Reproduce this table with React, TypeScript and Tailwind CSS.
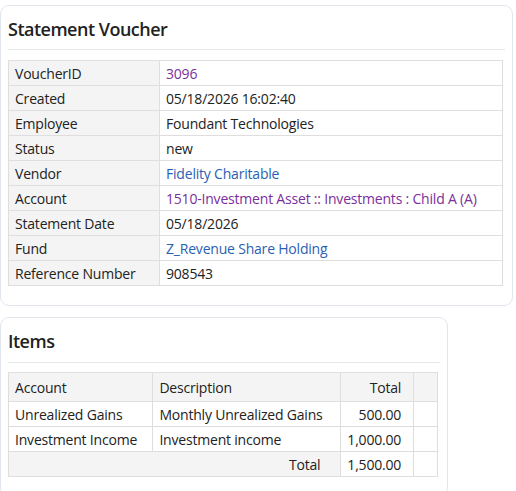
const rows: { label: string; value: string; kind?: "visited" | "link" }[] = [
  { label: "VoucherID", value: "3096", kind: "visited" },
  { label: "Created", value: "05/18/2026 16:02:40" },
  { label: "Employee", value: "Foundant Technologies" },
  { label: "Status", value: "new" },
  { label: "Vendor", value: "Fidelity Charitable", kind: "link" },
  { label: "Account", value: "1510-Investment Asset :: Investments : Child A (A)", kind: "visited" },
  { label: "Statement Date", value: "05/18/2026" },
  { label: "Fund", value: "Z_Revenue Share Holding", kind: "link" },
  { label: "Reference Number", value: "908543" },
];

const items = [
  { account: "Unrealized Gains", description: "Monthly Unrealized Gains", total: "500.00" },
  { account: "Investment Income", description: "Investment income", total: "1,000.00" },
];

const cell = "border border-[#dedede] px-[6px] h-[25px] align-middle";

export default function App() {
  return (
    <div className="w-[516px] h-[491px] bg-white pt-[5px] text-[14px] tracking-[-0.2px] text-[#222] font-['Open_Sans',sans-serif]">
      <div className="w-[513px] rounded-[9px] border border-[#e1e6ee] px-[7px] pb-[19px]">
        <div className="h-[44px] border-b border-[#e3e6ea] pt-[11px] text-[18px] leading-[24px] font-semibold tracking-[-0.5px]">
          Statement Voucher
        </div>
        <table className="mt-[10px] w-[495px] border-collapse">
          <tbody>
            {rows.map((r) => (
              <tr key={r.label}>
                <td className={`${cell} w-[151px] bg-[#f4f4f4]`}>{r.label}</td>
                <td className={cell}>
                  {r.kind === "visited" ? (
                    <a className="text-[#7b2f9c]">{r.value}</a>
                  ) : r.kind === "link" ? (
                    <a className="text-[#2a5fb3]">{r.value}</a>
                  ) : (
                    r.value
                  )}
                </td>
              </tr>
            ))}
          </tbody>
        </table>
      </div>

      <div className="mt-[11px] w-[448px] rounded-[9px] border border-[#e1e6ee] px-[7px] pb-[19px]">
        <div className="h-[45px] border-b border-[#e3e6ea] pt-[11px] text-[18px] leading-[24px] font-semibold tracking-[-0.5px]">
          Items
        </div>
        <table className="mt-[9px] w-[430px] border-collapse">
          <thead>
            <tr className="bg-[#f4f4f4]">
              <th className={`${cell} h-[29px] w-[145px] text-left font-normal`}>Account</th>
              <th className={`${cell} h-[29px] w-[189px] text-left font-normal`}>Description</th>
              <th className={`${cell} h-[29px] w-[71px] pr-[12px] text-right font-normal`}>Total</th>
              <th className={`${cell} h-[29px] w-[24px]`}></th>
            </tr>
          </thead>
          <tbody>
            {items.map((it) => (
              <tr key={it.account}>
                <td className={cell}>{it.account}</td>
                <td className={cell}>{it.description}</td>
                <td className={`${cell} pr-[12px] text-right`}>{it.total}</td>
                <td className={cell}></td>
              </tr>
            ))}
            <tr>
              <td colSpan={2} className={`${cell} bg-[#f4f4f4] pr-[20px] text-right`}>
                Total
              </td>
              <td className={`${cell} pr-[12px] text-right`}>1,500.00</td>
              <td className={cell}></td>
            </tr>
          </tbody>
        </table>
      </div>
    </div>
  );
}
